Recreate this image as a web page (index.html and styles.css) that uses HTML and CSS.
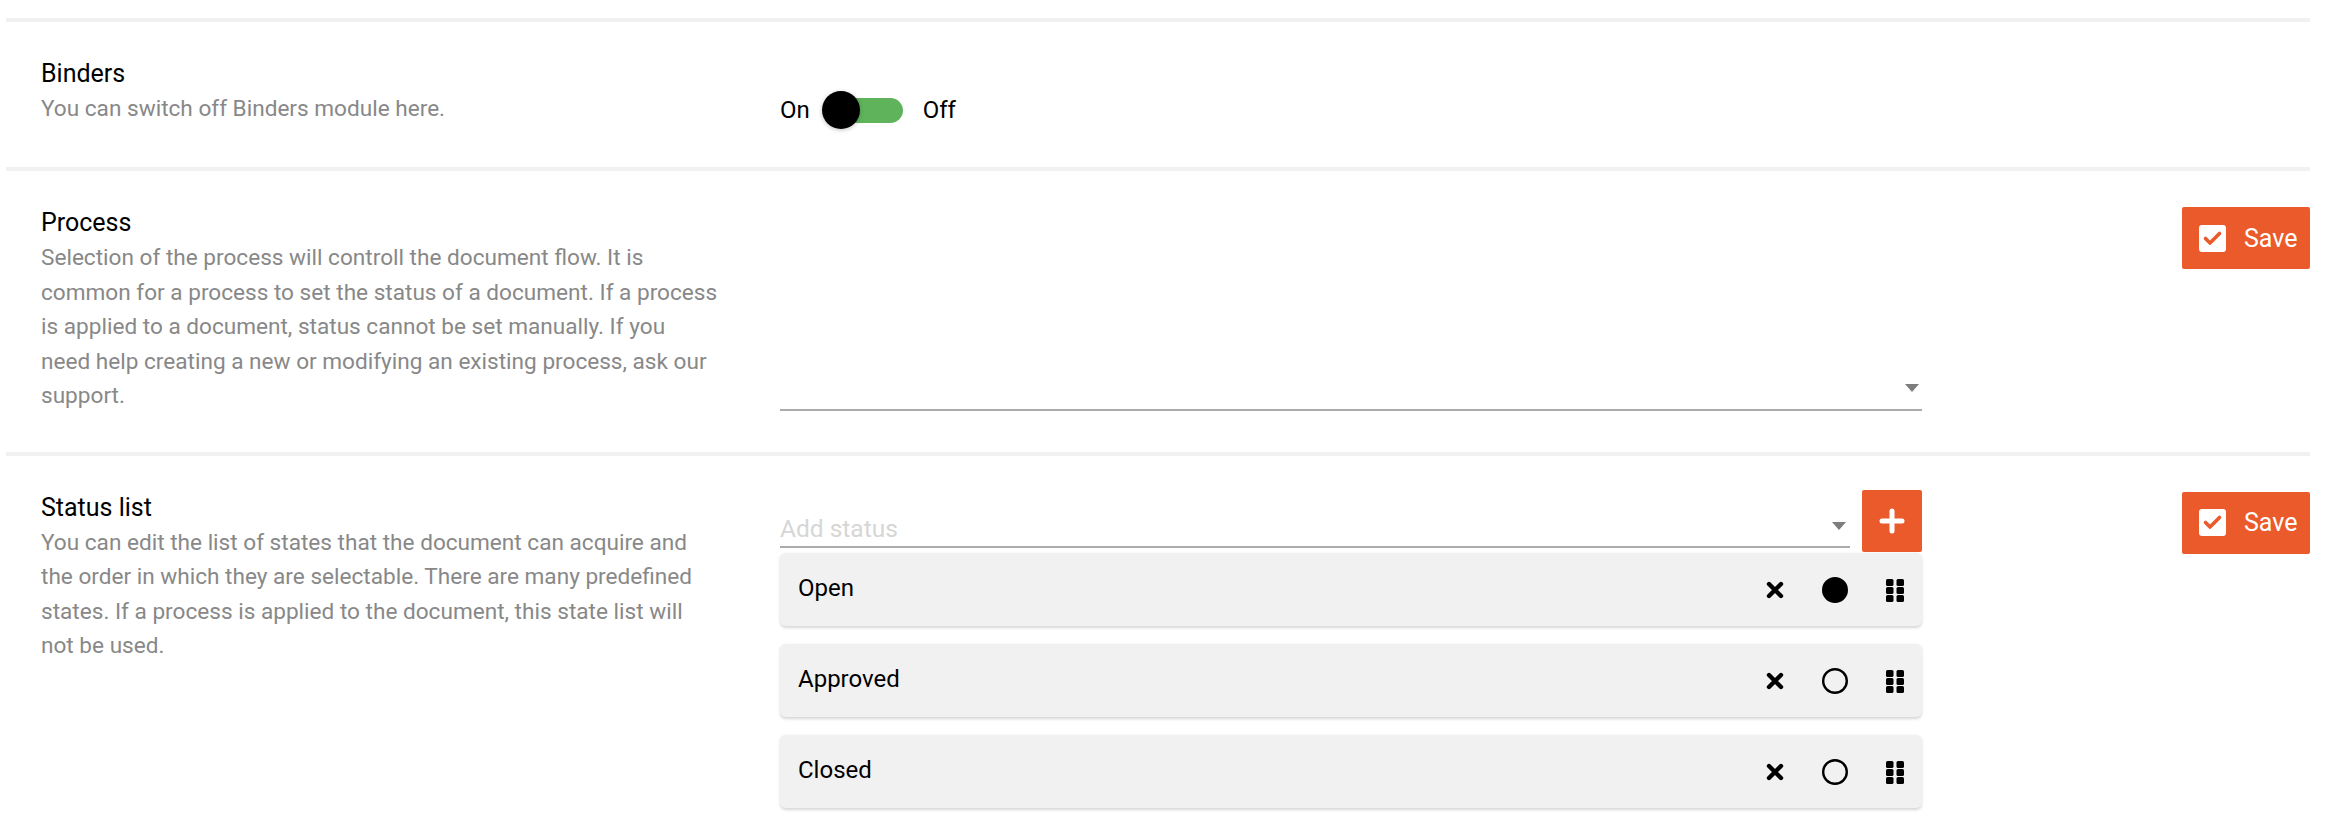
FILE: index.html
```html
<!DOCTYPE html>
<html lang="en">
<head>
<meta charset="utf-8">
<title>Settings</title>
<link rel="stylesheet" href="styles.css">
</head>
<body>
<div class="settings">
  <section class="row">
    <div class="info">
      <div class="title">Binders</div>
      <div class="desc">You can switch off Binders module here.</div>
    </div>
    <div class="control control-toggle">
      <div class="toggle">
        <span class="toggle-label">On</span>
        <span class="switch"><span class="track"></span><span class="knob"></span></span>
        <span class="toggle-label off">Off</span>
      </div>
    </div>
    <div class="actions"></div>
  </section>

  <section class="row">
    <div class="info">
      <div class="title">Process</div>
      <div class="desc">Selection of the process will controll the document flow. It is common for a process to set the status of a document. If a process is applied to a document, status cannot be set manually. If you need&nbsp;help creating a new or modifying an existing process, ask our support.</div>
    </div>
    <div class="control control-bottom">
      <div class="select select-full"><span class="caret"></span></div>
    </div>
    <div class="actions">
      <button class="save"><svg class="save-icon" width="27" height="27" viewBox="0 0 27 27"><rect width="27" height="27" rx="3" fill="#fff"/><path d="M6.5 13.5 L11 18 L20.5 8.5" fill="none" stroke="#eb5a2a" stroke-width="3.6" stroke-linecap="round" stroke-linejoin="round"/></svg><span>Save</span></button>
    </div>
  </section>

  <section class="row">
    <div class="info">
      <div class="title">Status list</div>
      <div class="desc">You can edit the list of states that the document can acquire and the order in which they are selectable. There are many predefined states. If a process is applied to the document, this state list will not&nbsp;be used.</div>
    </div>
    <div class="control">
      <div class="add-row">
        <div class="select select-add"><span class="placeholder">Add status</span><span class="caret"></span></div>
        <button class="add-btn"><svg width="28" height="28" viewBox="0 0 28 28"><path d="M14 4 V24 M4 14 H24" stroke="#fff" stroke-width="5" stroke-linecap="round"/></svg></button>
      </div>
      <ul class="status-list">
        <li class="status">
          <span class="status-name">Open</span>
          <span class="status-icons">
            <svg class="ic-x" width="18" height="18" viewBox="0 0 18 18"><path d="M3 3 L15 15 M15 3 L3 15" stroke="#000" stroke-width="4.4" stroke-linecap="round"/></svg>
            <svg class="ic-dot" width="26" height="26" viewBox="0 0 26 26"><circle cx="13" cy="13" r="11.8" fill="#000" stroke="#000" stroke-width="2.4"/></svg>
            <svg class="ic-grip" width="18" height="23" viewBox="0 0 18 23"><rect x="0" y="0" width="7.5" height="7" rx="1.6"/><rect x="10.5" y="0" width="7.5" height="7" rx="1.6"/><rect x="0" y="8" width="7.5" height="7" rx="1.6"/><rect x="10.5" y="8" width="7.5" height="7" rx="1.6"/><rect x="0" y="16" width="7.5" height="7" rx="1.6"/><rect x="10.5" y="16" width="7.5" height="7" rx="1.6"/></svg>
          </span>
        </li>
        <li class="status">
          <span class="status-name">Approved</span>
          <span class="status-icons">
            <svg class="ic-x" width="18" height="18" viewBox="0 0 18 18"><path d="M3 3 L15 15 M15 3 L3 15" stroke="#000" stroke-width="4.4" stroke-linecap="round"/></svg>
            <svg class="ic-dot" width="26" height="26" viewBox="0 0 26 26"><circle cx="13" cy="13" r="11.8" fill="none" stroke="#000" stroke-width="2.4"/></svg>
            <svg class="ic-grip" width="18" height="23" viewBox="0 0 18 23"><rect x="0" y="0" width="7.5" height="7" rx="1.6"/><rect x="10.5" y="0" width="7.5" height="7" rx="1.6"/><rect x="0" y="8" width="7.5" height="7" rx="1.6"/><rect x="10.5" y="8" width="7.5" height="7" rx="1.6"/><rect x="0" y="16" width="7.5" height="7" rx="1.6"/><rect x="10.5" y="16" width="7.5" height="7" rx="1.6"/></svg>
          </span>
        </li>
        <li class="status">
          <span class="status-name">Closed</span>
          <span class="status-icons">
            <svg class="ic-x" width="18" height="18" viewBox="0 0 18 18"><path d="M3 3 L15 15 M15 3 L3 15" stroke="#000" stroke-width="4.4" stroke-linecap="round"/></svg>
            <svg class="ic-dot" width="26" height="26" viewBox="0 0 26 26"><circle cx="13" cy="13" r="11.8" fill="none" stroke="#000" stroke-width="2.4"/></svg>
            <svg class="ic-grip" width="18" height="23" viewBox="0 0 18 23"><rect x="0" y="0" width="7.5" height="7" rx="1.6"/><rect x="10.5" y="0" width="7.5" height="7" rx="1.6"/><rect x="0" y="8" width="7.5" height="7" rx="1.6"/><rect x="10.5" y="8" width="7.5" height="7" rx="1.6"/><rect x="0" y="16" width="7.5" height="7" rx="1.6"/><rect x="10.5" y="16" width="7.5" height="7" rx="1.6"/></svg>
          </span>
        </li>
      </ul>
    </div>
    <div class="actions">
      <button class="save"><svg class="save-icon" width="27" height="27" viewBox="0 0 27 27"><rect width="27" height="27" rx="3" fill="#fff"/><path d="M6.5 13.5 L11 18 L20.5 8.5" fill="none" stroke="#eb5a2a" stroke-width="3.6" stroke-linecap="round" stroke-linejoin="round"/></svg><span>Save</span></button>
    </div>
  </section>
</div>
</body>
</html>
```

FILE: styles.css
```css
* { box-sizing: border-box; }

html, body {
  margin: 0;
  padding: 0;
  background: #fff;
}

body {
  font-family: Roboto, "Liberation Sans", Arial, sans-serif;
  color: #000;
  height: 832px;
  overflow: hidden;
}

.settings {
  margin: 18px 16px 0 6px;
}

.row {
  display: flex;
  align-items: stretch;
  border-top: 4px solid #f1f1f1;
  padding: 34px 0 38px 35px;
}

.info {
  width: 739px;
  flex: none;
  padding-right: 56px;
}

.title {
  font-size: 25px;
  line-height: 36px;
  color: #000;
}

.desc {
  font-size: 22.6px;
  line-height: 34.5px;
  color: #888;
}

.control {
  width: 1142px;
  flex: none;
  display: flex;
  flex-direction: column;
}

.control-toggle {
  padding-top: 35px;
}

.control-bottom {
  justify-content: flex-end;
  padding-bottom: 3px;
}

.actions {
  flex: 1;
  display: flex;
  justify-content: flex-end;
  align-items: flex-start;
  padding-top: 2px;
}

/* toggle */
.toggle {
  display: flex;
  align-items: center;
  height: 38px;
}

.toggle-label {
  font-size: 24px;
  line-height: 38px;
}

.toggle-label.off {
  margin-left: 20px;
}

.switch {
  position: relative;
  width: 81px;
  height: 38px;
  margin-left: 12px;
}

.track {
  position: absolute;
  left: 18px;
  top: 6.5px;
  width: 63px;
  height: 25px;
  border-radius: 12.5px;
  background: #5fb35b;
}

.knob {
  position: absolute;
  left: 0;
  top: 0;
  width: 38px;
  height: 38px;
  border-radius: 50%;
  background: #000;
  box-shadow: 0 1px 4px rgba(0, 0, 0, 0.25);
}

/* select */
.select {
  position: relative;
  border-bottom: 2px solid #acacac;
}

.select-full {
  height: 40px;
}

.caret {
  position: absolute;
  right: 3px;
  bottom: 17px;
  width: 0;
  height: 0;
  border-left: 7.5px solid transparent;
  border-right: 7.5px solid transparent;
  border-top: 8px solid #7d7d7d;
}

.add-row {
  display: flex;
  align-items: flex-start;
  gap: 12px;
}

.select-add {
  flex: 1;
  height: 58px;
  display: flex;
  align-items: flex-end;
}

.select-add .caret {
  right: 4px;
  bottom: 16px;
}

.placeholder {
  font-size: 24.5px;
  line-height: 34px;
  color: #d6d6d6;
}

.add-btn {
  width: 60px;
  height: 62px;
  border: none;
  padding: 0;
  margin: 0;
  background: #eb5a2a;
  border-radius: 2px;
  display: flex;
  align-items: center;
  justify-content: center;
}

.add-btn svg {
  display: block;
}

/* status list */
.status-list {
  list-style: none;
  margin: 1px 0 0 0;
  padding: 0;
  display: flex;
  flex-direction: column;
  gap: 18px;
}

.status {
  height: 73px;
  background: #f1f1f1;
  border-radius: 6px;
  box-shadow: 0 1.5px 3px rgba(0, 0, 0, 0.16);
  display: flex;
  align-items: center;
  padding: 0 18px;
}

.status-name {
  flex: 1;
  font-size: 24px;
  line-height: 34px;
  margin-top: -2px;
}

.status-icons {
  display: flex;
  align-items: center;
  gap: 38px;
  margin-top: 2px;
}

.status-icons svg {
  display: block;
}

.ic-grip {
  fill: #000;
}

/* save button */
.save {
  width: 128px;
  height: 62px;
  border: none;
  border-radius: 2px;
  background: #eb5a2a;
  color: #fff;
  display: flex;
  align-items: center;
  padding: 0 0 0 17px;
  font-family: Roboto, "Liberation Sans", Arial, sans-serif;
  font-size: 25px;
  gap: 18px;
}

.save-icon {
  display: block;
  flex: none;
}
```
